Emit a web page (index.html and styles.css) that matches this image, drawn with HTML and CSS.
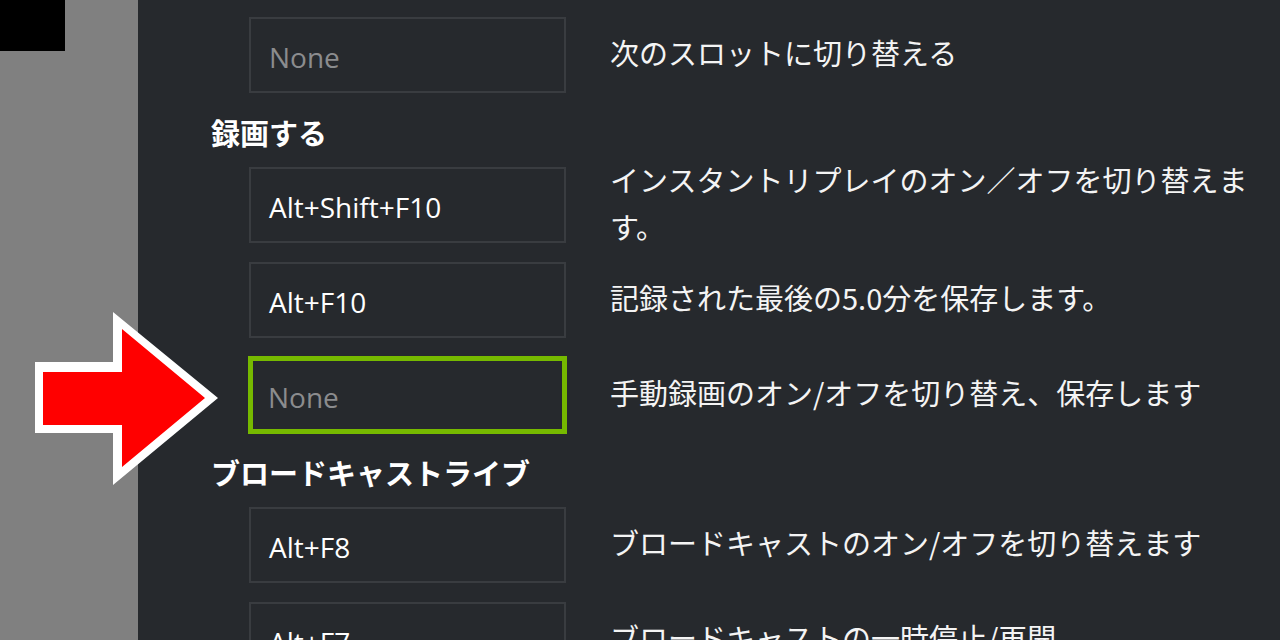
FILE: index.html
```html
<!DOCTYPE html>
<html lang="ja">
<head>
<meta charset="utf-8">
<title>ショートカット</title>
<link rel="stylesheet" href="styles.css">
</head>
<body>
<aside class="sidebar">
  <div class="sidebar-block"></div>
</aside>
<main class="panel">
  <div class="list">
    <div class="row">
      <div class="key empty">None</div>
      <div class="desc">次のスロットに切り替える</div>
    </div>
    <h2 class="heading">録画する</h2>
    <div class="row">
      <div class="key">Alt+Shift+F10</div>
      <div class="desc">インスタントリプレイのオン／オフを切り替えます。</div>
    </div>
    <div class="row">
      <div class="key">Alt+F10</div>
      <div class="desc">記録された最後の5.0分を保存します。</div>
    </div>
    <div class="row">
      <div class="key empty active">None</div>
      <div class="desc">手動録画のオン/オフを切り替え、保存します</div>
    </div>
    <h2 class="heading">ブロードキャストライブ</h2>
    <div class="row">
      <div class="key">Alt+F8</div>
      <div class="desc">ブロードキャストのオン/オフを切り替えます</div>
    </div>
    <div class="row">
      <div class="key">Alt+F7</div>
      <div class="desc">ブロードキャストの一時停止/再開</div>
    </div>
  </div>
</main>
<svg class="arrow" width="200" height="190" viewBox="30 305 200 190" aria-hidden="true">
  <polygon fill="#ffffff" points="35,362 113,362 113,312 218,398 113,485 113,433 35,433"/>
  <polygon fill="#ff0000" points="43,372 122,372 122,329 205,398 122,467 122,425 43,425"/>
</svg>
</body>
</html>
```
FILE: styles.css
```css
html, body {
  margin: 0;
  padding: 0;
}
body {
  width: 1280px;
  height: 640px;
  overflow: hidden;
  display: flex;
  position: relative;
  font-family: "Noto Sans CJK JP", "Noto Sans", sans-serif;
}
.sidebar {
  width: 138px;
  flex: none;
  background: #808080;
}
.sidebar-block {
  width: 65px;
  height: 51px;
  background: #000;
}
.panel {
  flex: 1;
  background: #26292d;
  padding: 17px 0 0 111px;
  overflow: hidden;
}
.list {
  display: flex;
  flex-direction: column;
}
.row {
  display: grid;
  grid-template-columns: 317px 650px;
  grid-template-rows: 76px;
  column-gap: 44px;
  align-items: center;
  height: 76px;
  margin-bottom: 19px;
}
.key {
  box-sizing: border-box;
  height: 76px;
  border: 2px solid #393c40;
  padding: 3px 0 0 18px;
  display: flex;
  align-items: center;
  font-family: "Open Sans", "Noto Sans", sans-serif;
  font-size: 28px;
  color: #ffffff;
}
.key.empty {
  color: #8b8c8e;
}
.key.active {
  border: 5px solid #76b900;
  margin: -1px;
  height: 78px;
  padding-left: 15px;
}
.desc {
  font-size: 29px;
  line-height: 47px;
  color: #f4f4f4;
  margin-bottom: 5px;
}
.heading {
  margin: 0 0 15px -38px;
  height: 40px;
  line-height: 40px;
  font-size: 29px;
  font-weight: 700;
  color: #ffffff;
}
.arrow {
  position: absolute;
  left: 30px;
  top: 305px;
}
```
